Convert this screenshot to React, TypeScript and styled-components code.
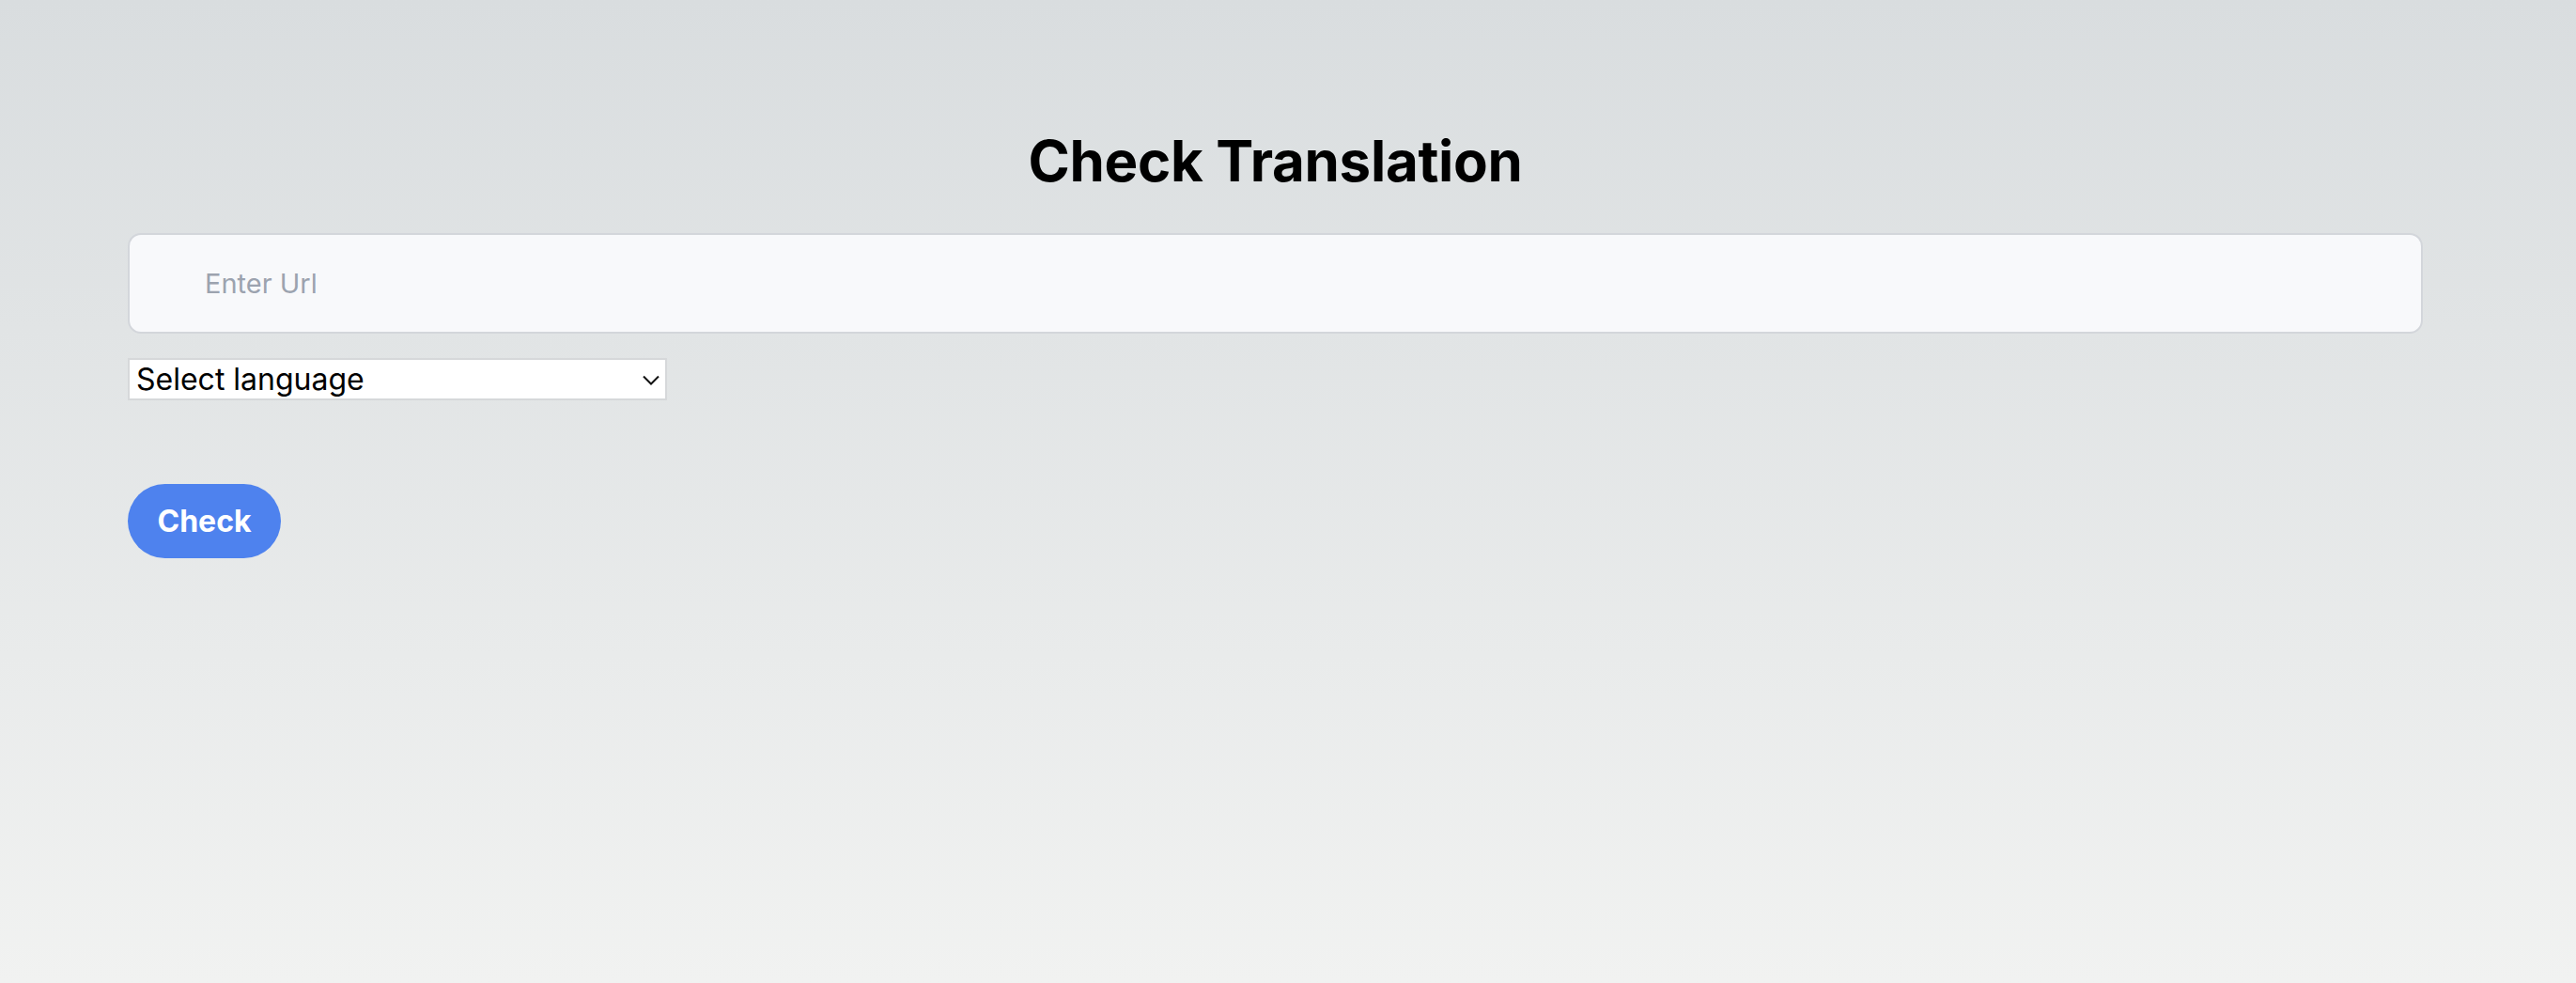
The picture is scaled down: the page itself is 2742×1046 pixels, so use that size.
import React from "react";
import styled, { createGlobalStyle } from "styled-components";

const Global = createGlobalStyle`
  html, body { margin: 0; padding: 0; }
  body {
    font-family: Inter, "Noto Sans", sans-serif;
    background: linear-gradient(180deg, #d9dddf 0%, #f1f2f1 100%);
    min-height: 1046px;
  }
`;

const Page = styled.main`
  min-height: 1046px;
  box-sizing: border-box;
  padding: 136px 163px 0 136px;
  display: flex;
  flex-direction: column;
  align-items: stretch;
`;

const Title = styled.h1`
  margin: 0 0 42px 0;
  text-align: center;
  font-family: Inter, sans-serif;
  font-weight: 700;
  font-size: 60px;
  line-height: 70px;
  letter-spacing: -0.3px;
  color: #000;
`;

const UrlInput = styled.input`
  box-sizing: border-box;
  height: 107px;
  width: 100%;
  border: 2px solid #d3d6db;
  border-radius: 14px;
  background: #f8f9fb;
  padding: 0 0 0 80px;
  font-family: Inter, sans-serif;
  font-size: 29px;
  color: #111;
  outline: none;
  &::placeholder { color: #9ca3af; }
`;

const SelectWrap = styled.div`
  position: relative;
  margin-top: 26px;
  align-self: flex-start;
  width: 574px;
  height: 45px;
`;

const LangSelect = styled.select`
  appearance: none;
  -webkit-appearance: none;
  box-sizing: border-box;
  width: 100%;
  height: 100%;
  font-family: Inter, sans-serif;
  font-size: 32px;
  color: #000;
  background: #fff;
  border: 2px solid #d6d8da;
  border-radius: 0;
  padding: 0 40px 0 7px;
  outline: none;
`;

const Chevron = styled.svg`
  position: absolute;
  right: 8px;
  top: 18px;
  width: 18px;
  height: 11px;
  pointer-events: none;
`;

const CheckButton = styled.button`
  margin-top: 89px;
  align-self: flex-start;
  width: 163px;
  height: 79px;
  border: none;
  border-radius: 40px;
  background: #4e82ee;
  color: #fff;
  font-family: Inter, sans-serif;
  font-weight: 700;
  font-size: 32px;
  cursor: pointer;
`;

export default function App() {
  return (
    <>
      <Global />
      <Page>
        <Title>Check Translation</Title>
        <UrlInput placeholder="Enter Url" />
        <SelectWrap>
          <LangSelect defaultValue="">
            <option value="">Select language</option>
          </LangSelect>
          <Chevron viewBox="0 0 18 11">
            <path d="M1 1.5 L9 9.5 L17 1.5" fill="none" stroke="#111" strokeWidth="2" />
          </Chevron>
        </SelectWrap>
        <CheckButton>Check</CheckButton>
      </Page>
    </>
  );
}
